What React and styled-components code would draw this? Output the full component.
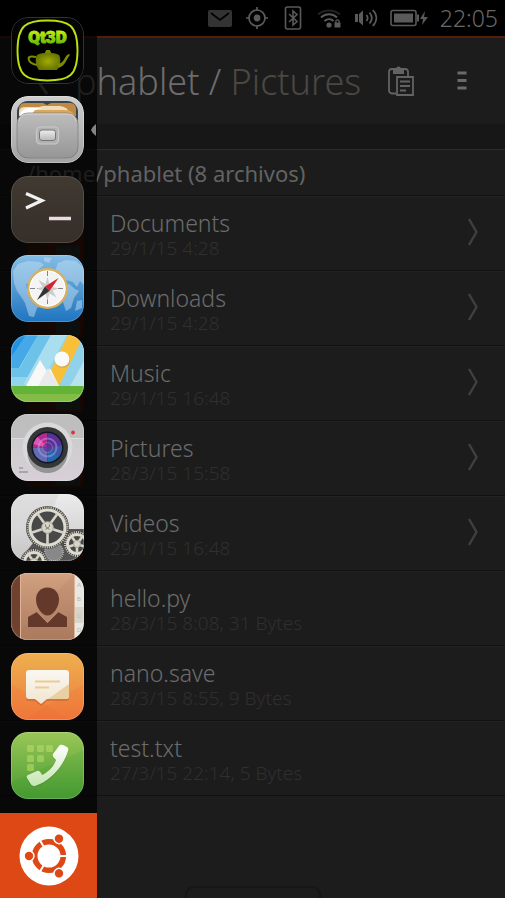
import React from "react";
import styled, { createGlobalStyle } from "styled-components";

const GlobalStyle = createGlobalStyle`
  *, *::before, *::after { box-sizing: border-box; }
  body {
    margin: 0;
    background: #1c1c1c;
    font-family: "Noto Sans", "Open Sans", sans-serif;
    font-weight: 300;
    color: #6c6c6c;
  }
  button { font: inherit; color: inherit; }
`;

const Page = styled.div`
  position: relative;
  min-height: 100vh;
  display: flex;
  flex-direction: column;
  background: #1c1c1c;
`;

const StatusBar = styled.header`
  display: flex;
  justify-content: flex-end;
  align-items: center;
  gap: 12px;
  height: 38px;
  padding: 0 7px;
  background: #000;
  border-bottom: 2px solid #551c08;
  color: #686868;
`;

const Clock = styled.time`
  min-width: 57px;
  text-align: right;
  white-space: nowrap;
  font-size: 23px;
  line-height: 36px;
`;

const TitleBar = styled.div`
  display: flex;
  align-items: center;
  height: 86px;
  padding: 0 12px 0 28px;
`;

const IconButton = styled.button`
  display: grid;
  place-items: center;
  flex: none;
  width: ${(p) => p.$width}px;
  height: 48px;
  padding: 0;
  border: 0;
  background: none;
`;

const Title = styled.h1`
  flex: 1;
  margin: 0;
  padding: 2px 0 0 19px;
  font-size: 36px;
  line-height: 48px;
  font-weight: 300;
  white-space: nowrap;
`;

const Muted = styled.span`
  color: #4b4743;
`;

const Strip = styled.div`
  height: 26px;
  background: #171717;
  border-bottom: 1px solid #2b2b2b;
`;

const PathHeading = styled.h2`
  margin: 0;
  padding: 1px 27px 0;
  font-size: 22px;
  line-height: 44px;
  font-weight: 400;
  color: #636363;
  border-bottom: 1px solid #111;
  white-space: nowrap;
`;

const FileList = styled.ul`
  margin: 0;
  padding: 0;
  list-style: none;
`;

const FileRow = styled.button`
  display: flex;
  align-items: center;
  gap: 27px;
  width: 100%;
  height: 75px;
  padding: 0 26px 0 27px;
  border: 0;
  border-top: 1px solid #222;
  border-bottom: 1px solid #111;
  background: none;
  text-align: left;
`;

const FileText = styled.span`
  flex: 1;
  display: flex;
  flex-direction: column;
  padding-top: 2px;
`;

const FileName = styled.span`
  font-size: 23px;
  line-height: 26px;
`;

const FileMeta = styled.span`
  font-size: 19px;
  line-height: 24px;
  color: #2f2f2f;
`;

const BottomHandle = styled.div`
  width: 136px;
  height: 12px;
  margin: auto auto 0;
  border: 2px solid #161616;
  border-bottom: 0;
  border-radius: 9px 9px 0 0;
`;

const Launcher = styled.nav`
  position: absolute;
  inset: 0 auto 0 0;
  width: 97px;
  display: flex;
  flex-direction: column;
  background: rgba(0, 0, 0, 0.7);
`;

const LauncherList = styled.div`
  flex: 1;
  display: flex;
  flex-direction: column;
  justify-content: space-between;
  padding: 17px 0 14px 11px;
`;

const LauncherItem = styled.div`
  display: flex;
  align-items: center;
  gap: 7px;
`;

const AppTile = styled.button`
  display: block;
  width: 73px;
  height: 67px;
  padding: 0;
  border: 0;
  border-radius: 17px;
  overflow: hidden;
  background: none;

  svg { display: block; }
`;

const HomeButton = styled.button`
  display: grid;
  place-items: center;
  height: 85px;
  padding: 0;
  border: 0;
  background: #dd4814;
`;

/* ---------- status icons ---------- */

const Mail = () => (
  <svg width="24" height="18" viewBox="0 0 24 18">
    <rect width="24" height="17" y="1" rx="2" fill="#333" />
    <path d="M3 4l9 7 9-7" fill="none" stroke="#000" strokeWidth="1.6" />
  </svg>
);

const Target = () => (
  <svg width="26" height="26" viewBox="0 0 26 26" fill="none" stroke="#5a5a5a" strokeWidth="1.7">
    <circle cx="13" cy="13" r="8" />
    <path d="M13 2v4M13 20v4M2 13h4M20 13h4" />
    <circle cx="13" cy="13" r="3.4" fill="#5a5a5a" stroke="none" />
  </svg>
);

const Bluetooth = () => (
  <svg width="22" height="24" viewBox="0 0 22 24" fill="none" stroke="#5a5a5a">
    <rect x="3.500" y="1" width="15" height="22" rx="2" strokeWidth="1.6" />
    <path d="M7 8l8 7.500-4 3.500V5l4 3.500L7 16" strokeWidth="1.6" />
  </svg>
);

const Wifi = () => (
  <svg width="26" height="24" viewBox="0 0 26 24" fill="none" stroke="#5a5a5a" strokeWidth="2">
    <path d="M2 8.500C8 3 18 3 24 8.500" stroke="#222" />
    <path d="M5 11.500C9.500 7.300 16.500 7.300 21 11.500M8.500 15c2.700-2.500 6.500-2.500 9 0" />
    <circle cx="13" cy="19" r="2.600" fill="#5a5a5a" stroke="none" />
    <rect x="18.500" y="16.500" width="6" height="5" fill="#5a5a5a" stroke="none" />
    <path d="M19.800 17v-1.500a1.700 1.700 0 0 1 3.400 0V17" strokeWidth="1.200" />
  </svg>
);

const Volume = () => (
  <svg width="24" height="20" viewBox="0 0 24 20" fill="none" stroke="#5a5a5a" strokeWidth="1.800">
    <path d="M1 6h3v8H1zM5 6l4-3.500v15L5 14z" fill="#5a5a5a" stroke="none" />
    <path d="M12.500 7c1.500 2 1.500 4 0 6M15.500 4.500c3 3.500 3 7.500 0 11M18.800 2c4.700 5 4.700 11 0 16" />
  </svg>
);

const Battery = () => (
  <svg width="38" height="18" viewBox="0 0 38 18">
    <rect x="1" y="1.500" width="25" height="15" rx="2" fill="none" stroke="#5a5a5a" strokeWidth="1.600" />
    <rect x="4" y="4.500" width="19" height="9" fill="#5a5a5a" />
    <path d="M27 5.500h2v7h-2z" fill="#5a5a5a" />
    <path d="M35 2l-5 8h3l-1 6 6-8h-4z" fill="#5a5a5a" />
  </svg>
);

/* ---------- page icons ---------- */

const Back = () => (
  <svg width="14" height="30" viewBox="0 0 14 30" fill="none" stroke="#636363" strokeWidth="3">
    <path d="M12 2L3 15l9 13" />
  </svg>
);

const Paste = () => (
  <svg width="26" height="31" viewBox="0 0 26 31" fill="none" stroke="#636363" strokeWidth="1.800">
    <path d="M8 27.500H4a3 3 0 0 1-3-3V6a3 3 0 0 1 3-3h13a3 3 0 0 1 3 3v4" />
    <path d="M5 8V3h3a2.500 2.500 0 0 1 5 0h3v5z" fill="#636363" stroke="none" />
    <path d="M9 11h16v18H9z" />
    <path d="M12 15.500h10M12 20h10M12 24.500h6" />
  </svg>
);

const Menu = () => (
  <svg width="10" height="20" viewBox="0 0 10 20" fill="#6a6a6a">
    <path d="M0.500 0.500h9v3h-9zM0.500 8h9v3h-9zM0.500 15.500h9v3h-9z" />
  </svg>
);

const Chevron = () => (
  <svg width="12" height="32" viewBox="0 0 12 32" fill="none" stroke="#404040" strokeWidth="2.400">
    <path d="M2 1l7.500 13L2 27" />
  </svg>
);

const FolderPicture = () => (
  <svg width="56" height="56" viewBox="0 0 56 56">
    <rect width="56" height="56" rx="3" fill="#4a1a0c" />
    <path d="M0 56V0l28 56z" fill="#3c1c0b" />
    <path d="M29 40h24v14H29z" fill="#2d3030" />
  </svg>
);

const FilePicture = () => (
  <svg width="56" height="56" viewBox="0 0 56 56">
    <path d="M6 1h29l9 9v44H6z" fill="#2c2c2c" />
  </svg>
);

/* ---------- launcher icons ---------- */

const Tile = ({ children }) => (
  <svg width="73" height="67" viewBox="0 0 73 67">{children}</svg>
);

const Edge = ({ color = "#fff", opacity = 0.2 }) => (
  <rect x="0.500" y="0.500" width="72" height="66" rx="16.500" fill="none" stroke={color} strokeOpacity={opacity} />
);

const Gradient = ({ id, from, to }) => (
  <linearGradient id={id} x1="0" y1="0" x2="0" y2="1">
    <stop offset="0" stopColor={from} />
    <stop offset="1" stopColor={to} />
  </linearGradient>
);

const Qt3D = () => (
  <Tile>
    <defs>
      <Gradient id="lime" from="#dcff10" to="#52ad08" />
      <radialGradient id="pot">
        <stop offset="0" stopColor="#a0ad00" />
        <stop offset="1" stopColor="#687500" />
      </radialGradient>
    </defs>
    <rect width="73" height="67" rx="17" fill="#050505" />
    <Edge opacity="0.180" />
    <path d="M36.500 3.500C58 3.500 66.500 8 66.500 33.500S58 63.500 36.500 63.500 6.500 59 6.500 33.500 15 3.500 36.500 3.500z" fill="#000" stroke="#bce00a" strokeWidth="1.900" />
    <text x="36.500" y="26" textAnchor="middle" fontFamily="Roboto, Inter, sans-serif" fontWeight="900" fontSize="17" fill="url(#lime)" stroke="url(#lime)" strokeWidth="1">Qt3D</text>
    <path d="M26 38c5-3 17-3 22 0 2 3 2 10-2 15H28c-4-5-4-12-2-15z" fill="url(#pot)" />
    <path d="M34 36c0-2 1-1 1-3h4c0 2 1 1 1 3z" fill="#7d8a00" />
    <path d="M25 40c-11-3-9 6 1 8" fill="none" stroke="#7d8a00" strokeWidth="2" />
    <path d="M47 47c6-1 6-6 9-9l2-1 1 1c-4 4-4 11-12 13z" fill="#7d8a00" />
  </Tile>
);

const Files = () => (
  <Tile>
    <defs>
      <Gradient id="frame" from="#cfcfcf" to="#a2a2a2" />
      <Gradient id="drawer" from="#bdbdbd" to="#969696" />
      <Gradient id="handle" from="#eeeeee" to="#b8b8b8" />
    </defs>
    <rect width="73" height="67" rx="17" fill="url(#frame)" />
    <rect x="6" y="5" width="61" height="57" rx="11" fill="#39444b" />
    <path d="M8 20v-8q1-5 6-5h18l4 2 4-2h19q5 0 6 5v8z" fill="#c18a42" />
    <path d="M8 20v-5q1-4 6-4h14l4-1h17q9 1 9 8z" fill="#f2dcb8" />
    <path d="M9 20q1-8 9-8h13q-8 1-11 8z" fill="#fff" />
    <path d="M24 14h29q8 0 10 5H20z" fill="#d9a85f" />
    <rect x="6" y="17" width="61" height="45" rx="11" fill="url(#drawer)" stroke="#818181" strokeWidth="0.800" />
    <path d="M8 25q1-7 9-7h39q8 0 9 7" fill="none" stroke="#dcdcdc" strokeWidth="0.800" />
    <rect x="25.500" y="31" width="22" height="17" rx="4" fill="#b1b1b1" stroke="#c9c9c9" strokeWidth="1.200" />
    <rect x="28.500" y="34" width="16" height="10.500" rx="2.500" fill="url(#handle)" stroke="#777" />
    <Edge opacity="0.300" />
  </Tile>
);

const Terminal = () => (
  <Tile>
    <defs><Gradient id="term" from="#413a32" to="#342e29" /></defs>
    <rect width="73" height="67" fill="url(#term)" />
    <path d="M0 41h73v26H0z" fill="#39322c" opacity="0.400" />
    <path d="M15 17.500l16 7-16 7.500" fill="none" stroke="#f1f1f1" strokeWidth="3.200" />
    <path d="M38 42.500h22" stroke="#e9dce0" strokeWidth="3.500" />
    <Edge opacity="0.120" />
  </Tile>
);

const Browser = () => (
  <Tile>
    <defs><Gradient id="sea" from="#86bde6" to="#1f75c0" /></defs>
    <rect width="73" height="67" fill="url(#sea)" />
    <g fill="#c5e0f1" opacity="0.480">
      <path d="M2 16l5-7 10-3 12 1 4 3-5 4 1 5-6 3-3 6-5 1 1 5 4 3 7 1 6 6-2 6-5 3-3 9-5-1-4-13-3-5-5-7-3-8z" />
      <path d="M33 2l8 1-3 5-5-2zM44 16l3-8 8-3 10 1 8 7v17l-4-4-3 6-4-5-7-2-5 3-6-4zM47 32l11-3 6 5 4 2-5 7-3 10-5 3-4-12-6-5zM66 46l5-1v8l-7 3z" />
    </g>
    <circle cx="36.500" cy="35" r="19.500" fill="#145b96" opacity="0.450" />
    <circle cx="36.500" cy="33.500" r="19.200" fill="#f4f4f4" stroke="#d8b15e" strokeWidth="2.400" />
    <circle cx="36.500" cy="33.500" r="17.500" fill="none" stroke="#fff" />
    <path d="M36.500 16v35M19 33.500h35" stroke="#777" strokeWidth="0.900" strokeDasharray="5 2" />
    <path d="M36.500 22l2 7 7-4-4 7 6 1.500-6 2 4 7-7-4-2 7-2-7-7 4 4-7-6-2 6-1.500-4-7 7 4z" fill="#ccc" />
    <path d="M47.500 23L38.500 36 34 31.500z" fill="#d52231" />
    <path d="M26 45l8-13.500 4.500 4.500z" fill="#333" />
    <Edge />
  </Tile>
);

const Gallery = () => (
  <Tile>
    <rect width="73" height="67" fill="#91d4ec" />
    <path d="M0 0h27L8 33H0z" fill="#45a9e8" />
    <path d="M0 0h15L0 22z" fill="#2391e2" />
    <path d="M27 0h13L17 42H0V33h9z" fill="#6dc2e9" />
    <path d="M40 0h16L29 50H12z" fill="#a9deef" />
    <path d="M57 0h16L48 51l-9-14z" fill="#f8bf3a" />
    <path d="M73 3v48H48z" fill="#91d1ea" />
    <path d="M73 26v25H59z" fill="#b8e2ef" />
    <path d="M15 51l14-26 8 13 2-5 9 18z" fill="#f8f8f8" />
    <path d="M27 51l10-18 11 18z" fill="#e7e9ea" />
    <circle cx="51.500" cy="25" r="7.700" fill="#9b8d68" opacity="0.400" />
    <circle cx="51" cy="24" r="7.500" fill="#fafafa" />
    <path d="M0 51h73v16H0z" fill="#63b336" />
    <path d="M0 59h73v8H0z" fill="#83bd48" />
    <Edge />
  </Tile>
);

const Camera = () => (
  <Tile>
    <defs>
      <Gradient id="body" from="#c9c8c8" to="#d7d0d7" />
      <clipPath id="lens"><circle cx="36.500" cy="33.500" r="14.500" /></clipPath>
    </defs>
    <rect width="73" height="67" fill="url(#body)" />
    <path d="M0 24h73V0H0z" fill="#b8b8b8" opacity="0.650" />
    <path d="M0 24.500h73" stroke="#ddd" />
    <circle cx="36.500" cy="33.500" r="25" fill="#d9d9d9" />
    <circle cx="36.500" cy="39" r="20" fill="#777" opacity="0.700" />
    <circle cx="36.500" cy="33.500" r="20.500" fill="#343638" />
    <circle cx="36.500" cy="33.500" r="16" fill="#141625" />
    <g clipPath="url(#lens)">
      <path d="M36.500 33.500V18H20v15.500z" fill="#b32a91" />
      <path d="M36.500 33.500V18H53v15.500z" fill="#58309a" />
      <path d="M36.500 33.500H20V50h16.500z" fill="#626cb8" />
      <path d="M36.500 33.500H53V50H36.500z" fill="#226ab0" />
      <path d="M36.500 33.500L24 20l-6 9z" fill="#de55b5" />
      <path d="M36.500 33.500L54 31v18z" fill="#3957a4" />
    </g>
    <circle cx="36.500" cy="33.500" r="9" fill="none" stroke="#c7a7dc" strokeWidth="2" opacity="0.450" />
    <circle cx="36.500" cy="33.500" r="5" fill="#673093" stroke="#a080c0" opacity="0.650" />
    <circle cx="62" cy="18.500" r="1.900" fill="#e33035" />
    <path d="M8 54h4M8 58h9" stroke="#999" strokeWidth="1.400" />
    <Edge />
  </Tile>
);

const Gear = ({ x, y, r, spokes, hub = "#d8d5c8", children }) => (
  <g transform={`translate(${x} ${y})`}>
    <circle r={r + 1.500} fill="#414141" />
    <circle r={r} fill="none" stroke="#c9c5b6" strokeWidth="2" strokeDasharray="1.200 1" />
    <circle r={r - 2.500} fill="#484848" stroke="#dedbd0" strokeWidth="3" />
    {Array.from({ length: spokes }, (_, i) => (
      <path key={i} d={`M0 0V${3 - r}`} stroke="#d5d2c6" strokeWidth="2.600" transform={`rotate(${36 + (i * 360) / spokes})`} />
    ))}
    <circle r={r * 0.290} fill={hub} stroke="#aaa79b" />
    {children}
  </g>
);

const Settings = () => (
  <Tile>
    <defs><Gradient id="steel" from="#ececec" to="#c4c4c4" /></defs>
    <rect width="73" height="67" fill="url(#steel)" />
    <path d="M0 0h48L36 30 0 34z" fill="#d5d5d5" opacity="0.600" />
    <path d="M8 67l14-18 33-14h18v32z" fill="#555" />
    <circle cx="43" cy="58" r="9" fill="#888" stroke="#aaa" strokeWidth="2" strokeDasharray="1 1" />
    <Gear x={66} y={50} r={12} spokes={5} />
    <Gear x={23} y={68} r={12} spokes={5} />
    <Gear x={36.500} y={33.500} r={20} spokes={5}>
      <path d="M-2-3v2l4 3M2-3v2l-4 3" stroke="#777" fill="none" />
    </Gear>
    <Edge />
  </Tile>
);

const Contacts = () => (
  <Tile>
    <defs><Gradient id="leather" from="#d1a080" to="#ad7c60" /></defs>
    <rect width="73" height="67" fill="#e9e7df" />
    <path d="M0 0h64v67H0z" fill="url(#leather)" />
    <path d="M0 67L64 0v67z" fill="#a46f54" opacity="0.150" />
    <path d="M0 0h9v67H0z" fill="#70412f" />
    <path d="M9.500 0v67M63.500 0v67" stroke="#ddb497" />
    <path d="M64 34h9v16h-9z" fill="#d7d4cc" />
    <g fill="#b8b8b2" fontFamily="Liberation Sans, sans-serif" fontSize="6">
      <text x="66" y="14">A</text><text x="66" y="28">B</text>
      <text x="66" y="45">C</text><text x="66" y="59">D</text>
    </g>
    <path d="M36.500 14.500c7 0 11.500 5 11.500 12 0 8-6 16-11.500 16S25 34.500 25 26.500c0-7 4.500-12 11.500-12z" fill="#64392b" />
    <path d="M26 39l10.500 11L47 39l9 5v10H17V44z" fill="#64392b" />
    <path d="M26.500 39l10 10 10-10" fill="none" stroke="#b98a6c" strokeWidth="1.200" />
    <Edge />
  </Tile>
);

const Messages = () => (
  <Tile>
    <defs>
      <Gradient id="orange" from="#edb04f" to="#f0793c" />
      <Gradient id="note" from="#faf7f2" to="#f1e5cf" />
    </defs>
    <rect width="73" height="67" fill="url(#orange)" />
    <path d="M0 31l36 22 37-22v36H0z" fill="#ed6934" opacity="0.180" />
    <path d="M14 67l22-15 21 15z" fill="#f06231" opacity="0.200" />
    <path d="M18 18h37q3 0 3 3v24q0 3-3 3H36l-6 5-6-5h-6q-3 0-3-3V21q0-3 3-3z" fill="#b5592c" opacity="0.450" />
    <path d="M18 17h37q3 0 3 3v23q0 3-3 3H36l-6 5-6-5h-6q-3 0-3-3V20q0-3 3-3z" fill="url(#note)" />
    <path d="M58 31v12q0 3-3 3H37z" fill="#ead0a0" />
    <path d="M24 28.500h25M24 34.500h14" stroke="#eacb94" strokeWidth="2.200" />
    <Edge />
  </Tile>
);

const Phone = () => (
  <Tile>
    <defs>
      <Gradient id="green" from="#9bc757" to="#479a32" />
      <Gradient id="receiver" from="#ffffff" to="#c5e5b0" />
    </defs>
    <rect width="73" height="67" fill="url(#green)" />
    <path d="M0 50L73 18v49H0z" fill="#2d9229" opacity="0.120" />
    <g fill="#b5da67" opacity="0.600">
      {[[16, 13], [26, 13], [35, 13], [16, 23], [26, 23], [16, 32]].map(([x, y]) => (
        <rect key={`${x}-${y}`} x={x} y={y} width="7" height="7" rx="1.500" />
      ))}
    </g>
    <path d="M48 15q1-2 4-1l4 2q2 1 1 4c-4 14-17 30-33 35q-3 1-5-3l-3-5q-1-2 1-3l9-4q2-1 4 2l1 2c7-3 12-9 14-15l-2-2q-2-2-1-4z" fill="#32752a" opacity="0.400" />
    <path d="M48 14q1-2 4-1l4 2q2 1 1 4c-4 14-17 30-33 35q-3 1-5-3l-3-5q-1-2 1-3l9-4q2-1 4 2l1 2c7-3 12-9 14-15l-2-2q-2-2-1-4z" fill="url(#receiver)" />
    <Edge />
  </Tile>
);

const Ubuntu = () => (
  <svg width="60" height="60" viewBox="0 0 60 60">
    <circle cx="30" cy="30" r="29.500" fill="#fff" />
    <circle cx="30" cy="30" r="14.300" fill="none" stroke="#dd4814" strokeWidth="5.600" />
    {[0, 120, 240].map((angle) => (
      <g key={angle} transform={`rotate(${angle} 30 30)`}>
        <path d="M40 30h10" stroke="#fff" strokeWidth="2" />
        <circle cx="10" cy="30" r="5.700" fill="#fff" />
        <circle cx="10" cy="30" r="4.200" fill="#dd4814" />
      </g>
    ))}
  </svg>
);

const FocusMark = () => (
  <svg width="5" height="12" viewBox="0 0 5 12">
    <path d="M5 0v12Q1 9 0 6 1 3 5 0z" fill="#858585" />
  </svg>
);

const apps = [
  { name: "Qt3D", Icon: Qt3D },
  { name: "Files", Icon: Files, focused: true },
  { name: "Terminal", Icon: Terminal },
  { name: "Browser", Icon: Browser },
  { name: "Gallery", Icon: Gallery },
  { name: "Camera", Icon: Camera },
  { name: "Settings", Icon: Settings },
  { name: "Contacts", Icon: Contacts },
  { name: "Messages", Icon: Messages },
  { name: "Phone", Icon: Phone },
];

const files = [
  { name: "Documents", meta: "29/1/15 4:28", folder: true },
  { name: "Downloads", meta: "29/1/15 4:28", folder: true },
  { name: "Music", meta: "29/1/15 16:48", folder: true },
  { name: "Pictures", meta: "28/3/15 15:58", folder: true },
  { name: "Videos", meta: "29/1/15 16:48", folder: true },
  { name: "hello.py", meta: "28/3/15 8:08, 31 Bytes" },
  { name: "nano.save", meta: "28/3/15 8:55, 9 Bytes" },
  { name: "test.txt", meta: "27/3/15 22:14, 5 Bytes" },
];

export default function App() {
  return (
    <>
      <GlobalStyle />
      <Page>
        <StatusBar>
          <Mail />
          <Target />
          <Bluetooth />
          <Wifi />
          <Volume />
          <Battery />
          <Clock>22:05</Clock>
        </StatusBar>
        <TitleBar>
          <IconButton $width={28} aria-label="Back"><Back /></IconButton>
          <Title>phablet / <Muted>Pictures</Muted></Title>
          <IconButton $width={60} aria-label="Paste"><Paste /></IconButton>
          <IconButton $width={62} aria-label="Menu"><Menu /></IconButton>
        </TitleBar>
        <Strip />
        <PathHeading>/home/phablet (8 archivos)</PathHeading>
        <FileList>
          {files.map((file) => (
            <li key={file.name}>
              <FileRow>
                {file.folder ? <FolderPicture /> : <FilePicture />}
                <FileText>
                  <FileName>{file.name}</FileName>
                  <FileMeta>{file.meta}</FileMeta>
                </FileText>
                {file.folder && <Chevron />}
              </FileRow>
            </li>
          ))}
        </FileList>
        <BottomHandle />
        <Launcher aria-label="Launcher">
          <LauncherList>
            {apps.map(({ name, Icon, focused }) => (
              <LauncherItem key={name}>
                <AppTile aria-label={name}><Icon /></AppTile>
                {focused && <FocusMark />}
              </LauncherItem>
            ))}
          </LauncherList>
          <HomeButton aria-label="Home"><Ubuntu /></HomeButton>
        </Launcher>
      </Page>
    </>
  );
}
